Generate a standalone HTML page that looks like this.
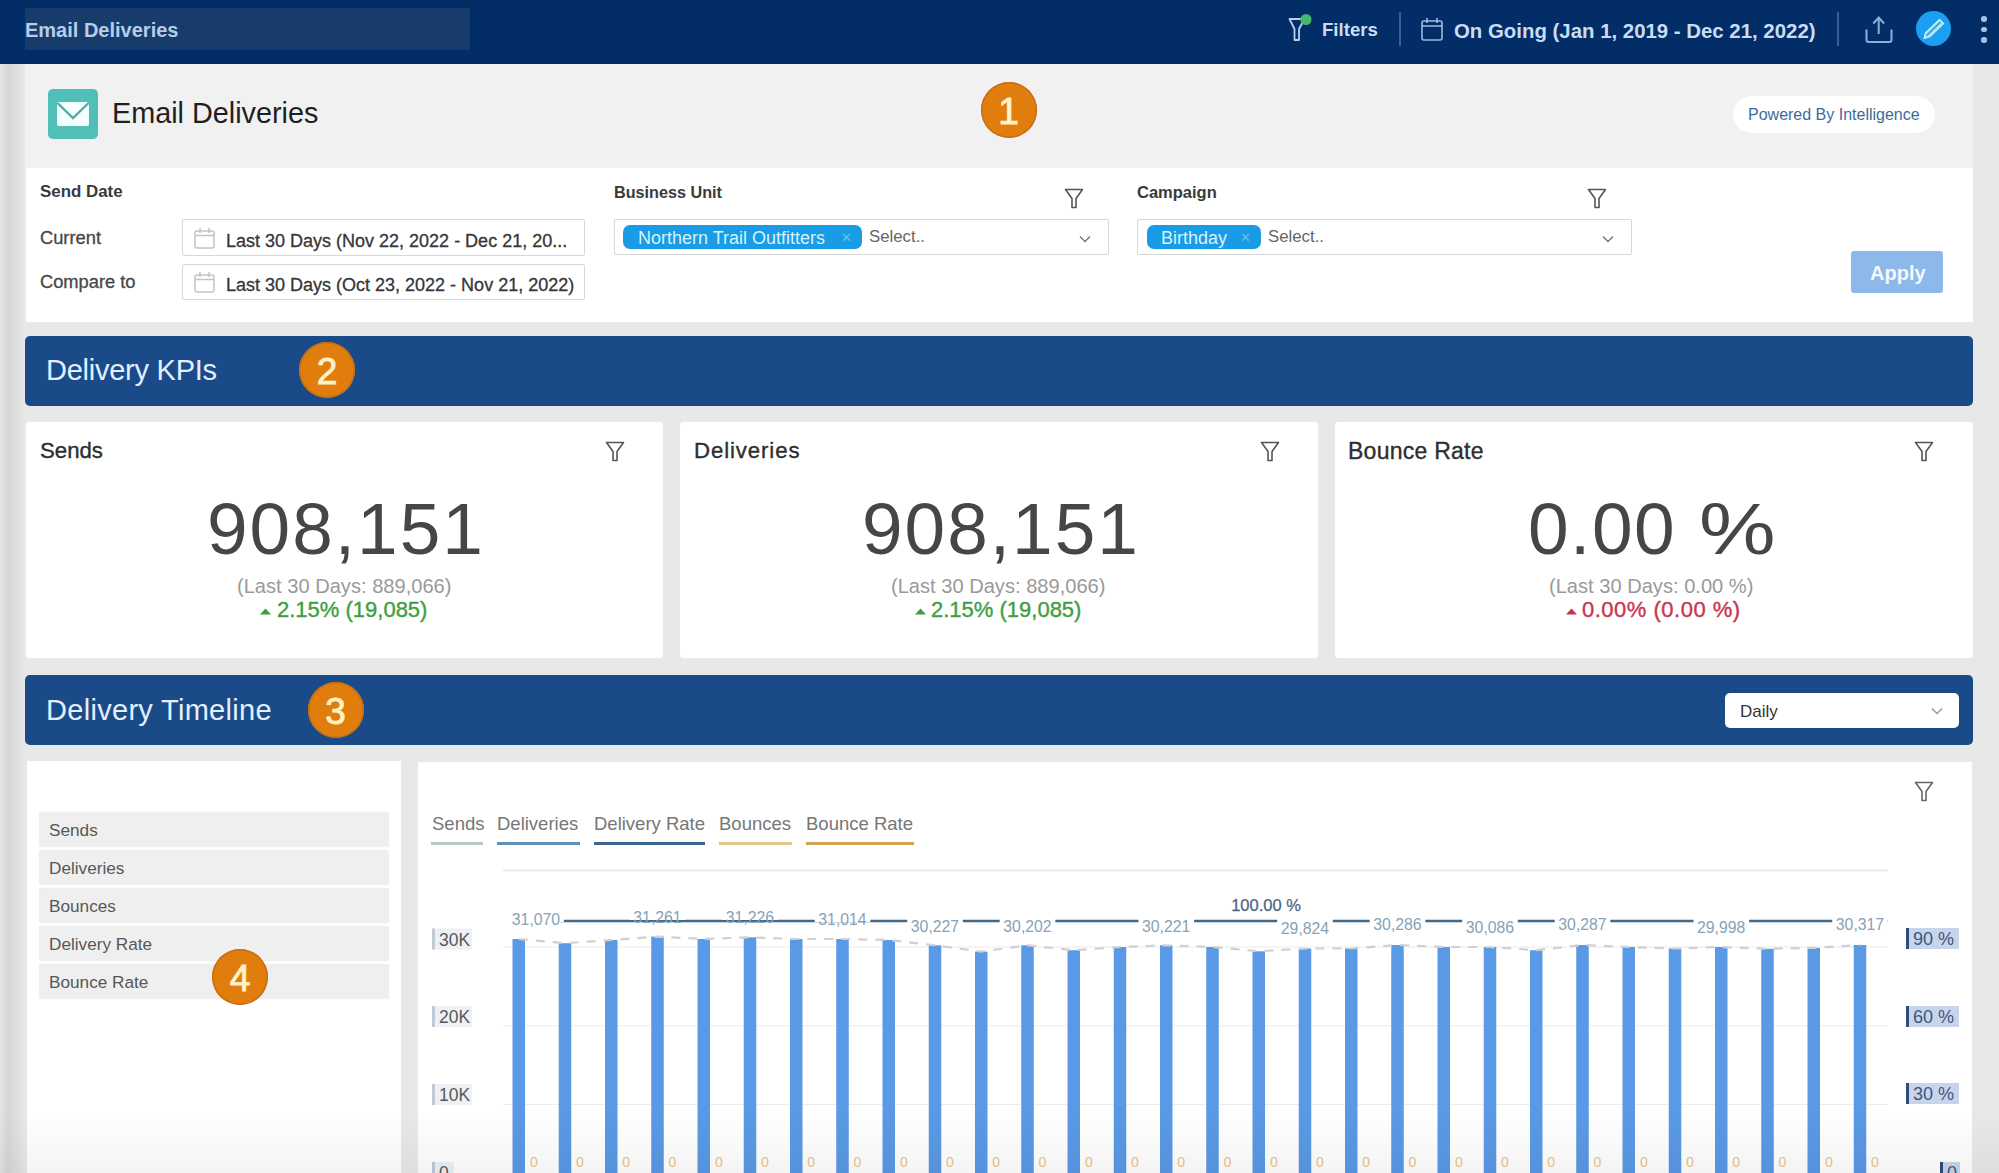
<!DOCTYPE html>
<html><head><meta charset="utf-8">
<style>
*{box-sizing:border-box;margin:0;padding:0}
html,body{width:1999px;height:1173px;overflow:hidden}
body{background:#e8e8e8;font-family:"Liberation Sans",sans-serif;position:relative;color:#2b2b2b}
.abs{position:absolute}
.nw{white-space:nowrap}
.t{position:absolute;white-space:nowrap;line-height:1}
#topbar{left:0;top:0;width:1999px;height:64px;background:#032d66}
.tb{position:absolute;font-size:20px;font-weight:bold;color:#c9dcf3;white-space:nowrap;line-height:1}
.inp{position:absolute;border:1.5px solid #d8d8d8;border-radius:2px;background:#fff}
.pill{position:absolute;background:#1a9be6;border-radius:7px;color:#e6f7ff;white-space:nowrap}
.secbar{background:#1a4b88;border-radius:5px;left:25px;width:1948px;height:70px}
.badge{position:absolute;border-radius:50%;background:#e17d0c;color:#fff2c6;font-size:37px;-webkit-text-stroke:0.9px #fff2c6;text-align:center;padding-top:2px;box-shadow:inset 0 0 0 1.5px #c46f18}
.card{background:#fff;top:422px;height:236px;border-radius:3px}
</style></head><body>
<div class="abs" style="left:0;top:64px;width:25px;height:1109px;background:linear-gradient(90deg,#e4e4e4 0px,#d7d7d7 8px,#e2e2e2 20px,#e8e8e8 25px)"></div>
<div id="topbar" class="abs"></div>
<div class="abs" style="left:25px;top:8px;width:445px;height:42px;background:#173b6a"></div>
<div class="tb" style="left:25px;top:20px;color:#b6cde9">Email Deliveries</div>
<svg class="abs" style="left:1286px;top:12px" width="28" height="32" viewBox="0 0 28 32">
  <path d="M3.5 7 H18.5 L13 17 V28 H8.5 V17 Z" fill="none" stroke="#b9d0ee" stroke-width="1.8" stroke-linejoin="round"/>
  <circle cx="20" cy="7.5" r="5.5" fill="#45b86a"/>
</svg>
<div class="tb" style="left:1322px;top:21px;font-size:18.6px">Filters</div>
<div class="abs" style="left:1399px;top:12px;width:2px;height:34px;background:#3a5e90"></div>
<svg class="abs" style="left:1420px;top:16px" width="26" height="26" viewBox="0 0 26 26">
  <rect x="2" y="5" width="20" height="19" rx="2" fill="none" stroke="#9db8de" stroke-width="1.6"/>
  <path d="M2 10 H22 M7 2 V7 M17 2 V7" stroke="#9db8de" stroke-width="1.6"/>
</svg>
<div class="tb" style="left:1454px;top:21px;font-size:20.4px">On Going (Jan 1, 2019 - Dec 21, 2022)</div>
<div class="abs" style="left:1837px;top:12px;width:2px;height:34px;background:#3a5e90"></div>
<svg class="abs" style="left:1862px;top:14px" width="34" height="32" viewBox="0 0 34 32">
  <path d="M4.5 15.5 V26 Q4.5 28 6.5 28 H27.5 Q29.5 28 29.5 26 V15.5" fill="none" stroke="#8eaedb" stroke-width="2"/>
  <path d="M16.7 20 V4 M11.3 9.5 L16.7 3.6 L22.1 9.5" fill="none" stroke="#8eaedb" stroke-width="2"/>
</svg>
<div class="abs" style="left:1915.5px;top:10.5px;width:35.5px;height:35.5px;border-radius:50%;background:#1b9ff0"></div>
<svg class="abs" style="left:1915px;top:10px" width="36" height="36" viewBox="0 0 36 36">
  <path d="M9 28.5 L10.5 23 L24.5 9.5 L28.5 13.5 L14.5 27 Z" fill="#8fe0ff" stroke="#c9f1ff" stroke-width="1.2" stroke-linejoin="round"/>
  <path d="M11.5 25.5 L25.5 12" stroke="#3b8fc0" stroke-width="1.3"/>
</svg>
<div class="abs" style="left:1981.3px;top:16.3px;width:5.4px;height:5.4px;border-radius:50%;background:#a9c0e6"></div>
<div class="abs" style="left:1981.3px;top:26.8px;width:5.4px;height:5.4px;border-radius:50%;background:#a9c0e6"></div>
<div class="abs" style="left:1981.3px;top:37.3px;width:5.4px;height:5.4px;border-radius:50%;background:#a9c0e6"></div>

<div class="abs" style="left:25px;top:64px;width:1948px;height:104px;background:#f1f1f1"></div>
<div class="abs" style="left:48px;top:89px;width:50px;height:50px;border-radius:5px;background:#50bfb8"></div>
<svg class="abs" style="left:48px;top:89px" width="50" height="50" viewBox="0 0 50 50">
  <rect x="9" y="13" width="32" height="24" rx="2" fill="#f4ffff"/>
  <path d="M9.5 14 L25 29 L40.5 14" fill="none" stroke="#58aaa3" stroke-width="2.4"/>
</svg>
<div class="t" style="left:112px;top:99px;font-size:28.8px;color:#1f1f1f">Email Deliveries</div>
<div class="badge" style="left:980.5px;top:82.0px;width:56px;height:56px;line-height:56px">1</div>
<div class="abs" style="left:1733px;top:96px;width:202px;height:37px;border-radius:19px;background:#fff"></div>
<div class="t" style="left:1748px;top:107px;font-size:16px;color:#3d6a98">Powered By Intelligence</div>

<div class="abs" style="left:26px;top:168px;width:1947px;height:154px;background:#fff"></div>
<div class="t" style="left:40px;top:184px;font-size:16.9px;font-weight:bold;color:#3a3a3a">Send Date</div>
<div class="t" style="left:40px;top:229px;font-size:18.3px;color:#474747;-webkit-text-stroke:0.3px #474747">Current</div>
<div class="t" style="left:40px;top:273px;font-size:18.3px;color:#474747;-webkit-text-stroke:0.3px #474747">Compare to</div>
<div class="inp" style="left:182px;top:219px;width:403px;height:37px"></div>
<div class="inp" style="left:182px;top:264px;width:403px;height:36px"></div>
<svg class="abs" style="left:193px;top:226px" width="24" height="24" viewBox="0 0 24 24"><rect x="2" y="5" width="19" height="17" rx="2" fill="none" stroke="#c4c4c4" stroke-width="1.5"/><path d="M2 9.5 H21 M7 2 V7 M16 2 V7" stroke="#c4c4c4" stroke-width="1.5"/></svg><svg class="abs" style="left:193px;top:270px" width="24" height="24" viewBox="0 0 24 24"><rect x="2" y="5" width="19" height="17" rx="2" fill="none" stroke="#c4c4c4" stroke-width="1.5"/><path d="M2 9.5 H21 M7 2 V7 M16 2 V7" stroke="#c4c4c4" stroke-width="1.5"/></svg>
<div class="t" style="left:226px;top:232px;font-size:18px;color:#363636;-webkit-text-stroke:0.3px #363636">Last 30 Days (Nov 22, 2022 - Dec 21, 20...</div>
<div class="t" style="left:226px;top:276px;font-size:18px;color:#363636;-webkit-text-stroke:0.3px #363636">Last 30 Days (Oct 23, 2022 - Nov 21, 2022)</div>

<div class="t" style="left:614px;top:184px;font-size:16.2px;font-weight:bold;color:#3a3a3a">Business Unit</div>
<svg class="abs" style="left:1064px;top:188px" width="20" height="21" viewBox="0 0 20 21"><path d="M1.5 1.5 H18.5 L12 10.5 V19.5 H8 V10.5 Z" fill="none" stroke="#555" stroke-width="1.6" stroke-linejoin="round"/></svg>
<div class="inp" style="left:614px;top:219px;width:495px;height:36px"></div>
<div class="pill" style="left:623px;top:225px;width:239px;height:24px"></div>
<div class="t" style="left:638px;top:229px;font-size:18px;color:#d2f4ff">Northern Trail Outfitters</div>
<div class="t" style="left:841px;top:231px;font-size:13px;color:#62c2f2">&#x2715;</div>
<div class="t" style="left:869px;top:229px;font-size:16.8px;color:#666">Select..</div>
<svg class="abs" style="left:1079px;top:235px" width="12" height="8" viewBox="0 0 12 8"><path d="M1 1.5 L6 6.5 L11 1.5" fill="none" stroke="#777" stroke-width="1.4"/></svg>

<div class="t" style="left:1137px;top:184px;font-size:16.5px;font-weight:bold;color:#3a3a3a">Campaign</div>
<svg class="abs" style="left:1587px;top:188px" width="20" height="21" viewBox="0 0 20 21"><path d="M1.5 1.5 H18.5 L12 10.5 V19.5 H8 V10.5 Z" fill="none" stroke="#555" stroke-width="1.6" stroke-linejoin="round"/></svg>
<div class="inp" style="left:1137px;top:219px;width:495px;height:36px"></div>
<div class="pill" style="left:1147px;top:225px;width:114px;height:24px"></div>
<div class="t" style="left:1161px;top:229px;font-size:18px;color:#d2f4ff">Birthday</div>
<div class="t" style="left:1240px;top:231px;font-size:13px;color:#62c2f2">&#x2715;</div>
<div class="t" style="left:1268px;top:229px;font-size:16.8px;color:#666">Select..</div>
<svg class="abs" style="left:1602px;top:235px" width="12" height="8" viewBox="0 0 12 8"><path d="M1 1.5 L6 6.5 L11 1.5" fill="none" stroke="#777" stroke-width="1.4"/></svg>
<div class="abs" style="left:1851px;top:251px;width:92px;height:42px;border-radius:3px;background:#8db9ea"></div>
<div class="t" style="left:1870px;top:263px;font-size:20px;font-weight:bold;color:#f3f8ff">Apply</div>

<div class="abs secbar" style="top:336px"></div>
<div class="t" style="left:46px;top:356px;font-size:29px;letter-spacing:-0.25px;color:#e2efff">Delivery KPIs</div>
<div class="badge" style="left:299.0px;top:342.0px;width:56px;height:56px;line-height:56px">2</div>

<div class="abs card" style="left:26px;width:637px"></div>
<div class="t" style="left:40px;top:440px;font-size:22.2px;color:#2e2e2e;-webkit-text-stroke:0.35px #2e2e2e">Sends</div>
<svg class="abs" style="left:605px;top:441px" width="20" height="21" viewBox="0 0 20 21"><path d="M1.5 1.5 H18.5 L12 10.5 V19.5 H8 V10.5 Z" fill="none" stroke="#555" stroke-width="1.6" stroke-linejoin="round"/></svg>
<div class="t" style="left:207px;top:492px;font-size:73px;letter-spacing:2px;color:#464646">908,151</div>
<div class="t" style="left:237px;top:576px;font-size:20.1px;color:#9a9a9a">(Last 30 Days: 889,066)</div>
<svg class="abs" style="left:260px;top:608px" width="11" height="7"><path d="M0 6.5 L5.5 0.5 L11 6.5 Z" fill="#3f9b46"/></svg>
<div class="t" style="left:277px;top:599px;font-size:22px;color:#3f9f44;-webkit-text-stroke:0.4px #3f9f44">2.15% (19,085)</div>

<div class="abs card" style="left:680px;width:638px"></div>
<div class="t" style="left:694px;top:440px;font-size:22.2px;letter-spacing:0.9px;color:#2e2e2e;-webkit-text-stroke:0.35px #2e2e2e">Deliveries</div>
<svg class="abs" style="left:1260px;top:441px" width="20" height="21" viewBox="0 0 20 21"><path d="M1.5 1.5 H18.5 L12 10.5 V19.5 H8 V10.5 Z" fill="none" stroke="#555" stroke-width="1.6" stroke-linejoin="round"/></svg>
<div class="t" style="left:862px;top:492px;font-size:73px;letter-spacing:2px;color:#464646">908,151</div>
<div class="t" style="left:891px;top:576px;font-size:20.1px;color:#9a9a9a">(Last 30 Days: 889,066)</div>
<svg class="abs" style="left:915px;top:608px" width="11" height="7"><path d="M0 6.5 L5.5 0.5 L11 6.5 Z" fill="#3f9b46"/></svg>
<div class="t" style="left:931px;top:599px;font-size:22px;color:#3f9f44;-webkit-text-stroke:0.4px #3f9f44">2.15% (19,085)</div>

<div class="abs card" style="left:1335px;width:638px"></div>
<div class="t" style="left:1348px;top:440px;font-size:23px;letter-spacing:0.25px;color:#2e2e2e;-webkit-text-stroke:0.35px #2e2e2e">Bounce Rate</div>
<svg class="abs" style="left:1914px;top:441px" width="20" height="21" viewBox="0 0 20 21"><path d="M1.5 1.5 H18.5 L12 10.5 V19.5 H8 V10.5 Z" fill="none" stroke="#555" stroke-width="1.6" stroke-linejoin="round"/></svg>
<div class="t" style="left:1528px;top:492px;font-size:73px;letter-spacing:1.5px;color:#464646">0.00<span style="display:inline-block;width:23px"></span><span style="display:inline-block;transform:scaleX(1.18);transform-origin:0 0">%</span></div>
<div class="t" style="left:1549px;top:576px;font-size:20.1px;color:#9a9a9a">(Last 30 Days: 0.00 %)</div>
<svg class="abs" style="left:1566px;top:608px" width="11" height="7"><path d="M0 6.5 L5.5 0.5 L11 6.5 Z" fill="#c2354f"/></svg>
<div class="t" style="left:1582px;top:599px;font-size:22px;letter-spacing:0.5px;color:#c8374f;-webkit-text-stroke:0.4px #c8374f">0.00% (0.00 %)</div>

<div class="abs secbar" style="top:675px"></div>
<div class="t" style="left:46px;top:696px;font-size:29px;letter-spacing:0.3px;color:#e2efff">Delivery Timeline</div>
<div class="badge" style="left:307.5px;top:681.5px;width:56px;height:56px;line-height:56px">3</div>
<div class="abs" style="left:1725px;top:693px;width:234px;height:35px;border-radius:5px;background:#fff"></div>
<div class="t" style="left:1740px;top:703px;font-size:17px;color:#333">Daily</div>
<svg class="abs" style="left:1931px;top:707px" width="12" height="8" viewBox="0 0 12 8"><path d="M1 1.5 L6 6.5 L11 1.5" fill="none" stroke="#999" stroke-width="1.4"/></svg>

<div class="abs" style="left:27px;top:761px;width:374px;height:420px;background:#fff"></div>
<div class="abs" style="left:39px;top:812px;width:350px;height:35px;background:#efefef;border-radius:3px;box-shadow:0 0 1px rgba(0,0,0,.12)"></div>
<div class="abs" style="left:39px;top:850px;width:350px;height:35px;background:#efefef;border-radius:3px;box-shadow:0 0 1px rgba(0,0,0,.12)"></div>
<div class="abs" style="left:39px;top:888px;width:350px;height:35px;background:#efefef;border-radius:3px;box-shadow:0 0 1px rgba(0,0,0,.12)"></div>
<div class="abs" style="left:39px;top:926px;width:350px;height:35px;background:#efefef;border-radius:3px;box-shadow:0 0 1px rgba(0,0,0,.12)"></div>
<div class="abs" style="left:39px;top:964px;width:350px;height:35px;background:#efefef;border-radius:3px;box-shadow:0 0 1px rgba(0,0,0,.12)"></div>
<div class="t" style="left:49px;top:822px;font-size:17.2px;color:#575757">Sends</div>
<div class="t" style="left:49px;top:860px;font-size:17.2px;color:#575757">Deliveries</div>
<div class="t" style="left:49px;top:898px;font-size:17.2px;color:#575757">Bounces</div>
<div class="t" style="left:49px;top:936px;font-size:17.2px;color:#575757">Delivery Rate</div>
<div class="t" style="left:49px;top:974px;font-size:17.2px;color:#575757">Bounce Rate</div>
<div class="badge" style="left:212.0px;top:949.0px;width:56px;height:56px;line-height:56px">4</div>

<div class="abs" style="left:418px;top:762px;width:1554px;height:420px;background:#fff"></div>
<svg class="abs" style="left:1914px;top:781px" width="20" height="21" viewBox="0 0 20 21"><path d="M1.5 1.5 H18.5 L12 10.5 V19.5 H8 V10.5 Z" fill="none" stroke="#666" stroke-width="1.6" stroke-linejoin="round"/></svg>
<div class="t" style="left:432px;top:815px;font-size:18.5px;color:#777">Sends</div>
<div class="t" style="left:497px;top:815px;font-size:18.5px;color:#777">Deliveries</div>
<div class="t" style="left:594px;top:815px;font-size:18.5px;color:#777">Delivery Rate</div>
<div class="t" style="left:719px;top:815px;font-size:18.5px;color:#777">Bounces</div>
<div class="t" style="left:806px;top:815px;font-size:18.5px;color:#777">Bounce Rate</div>
<div class="abs" style="left:431px;top:842px;width:52px;height:3px;background:#bcc6cb"></div>
<div class="abs" style="left:497px;top:842px;width:83px;height:3px;background:#5f90b8"></div>
<div class="abs" style="left:594px;top:842px;width:111px;height:3px;background:#3c6690"></div>
<div class="abs" style="left:719px;top:842px;width:73px;height:3px;background:#e6c48e"></div>
<div class="abs" style="left:806px;top:842px;width:108px;height:3px;background:#d6a356"></div>
<svg class="abs" style="left:0;top:0" width="1999" height="1173" viewBox="0 0 1999 1173" font-family="Liberation Sans, sans-serif">
<line x1="503" y1="870.5" x2="1888" y2="870.5" stroke="#e6e6e6" stroke-width="1.5"/>
<line x1="503" y1="947" x2="1888" y2="947" stroke="#ececec" stroke-width="1.2"/>
<line x1="503" y1="1025.75" x2="1888" y2="1025.75" stroke="#ececec" stroke-width="1.2"/>
<line x1="503" y1="1104.5" x2="1888" y2="1104.5" stroke="#ececec" stroke-width="1.2"/>
<rect x="512.50" y="939" width="12.5" height="244" fill="#5a99e5"/>
<rect x="558.75" y="943.2" width="12.5" height="239.79999999999995" fill="#5a99e5"/>
<rect x="605.00" y="940" width="12.5" height="243" fill="#5a99e5"/>
<rect x="651.25" y="936.6" width="12.5" height="246.39999999999998" fill="#5a99e5"/>
<rect x="697.50" y="939" width="12.5" height="244" fill="#5a99e5"/>
<rect x="743.75" y="937.3" width="12.5" height="245.70000000000005" fill="#5a99e5"/>
<rect x="790.00" y="939" width="12.5" height="244" fill="#5a99e5"/>
<rect x="836.25" y="939" width="12.5" height="244" fill="#5a99e5"/>
<rect x="882.50" y="940" width="12.5" height="243" fill="#5a99e5"/>
<rect x="928.75" y="945.3" width="12.5" height="237.70000000000005" fill="#5a99e5"/>
<rect x="975.00" y="951.6" width="12.5" height="231.39999999999998" fill="#5a99e5"/>
<rect x="1021.25" y="945.3" width="12.5" height="237.70000000000005" fill="#5a99e5"/>
<rect x="1067.50" y="950.2" width="12.5" height="232.79999999999995" fill="#5a99e5"/>
<rect x="1113.75" y="947" width="12.5" height="236" fill="#5a99e5"/>
<rect x="1160.00" y="945.3" width="12.5" height="237.70000000000005" fill="#5a99e5"/>
<rect x="1206.25" y="947" width="12.5" height="236" fill="#5a99e5"/>
<rect x="1252.50" y="951.3" width="12.5" height="231.70000000000005" fill="#5a99e5"/>
<rect x="1298.75" y="948.5" width="12.5" height="234.5" fill="#5a99e5"/>
<rect x="1345.00" y="948.5" width="12.5" height="234.5" fill="#5a99e5"/>
<rect x="1391.25" y="945" width="12.5" height="238" fill="#5a99e5"/>
<rect x="1437.50" y="947" width="12.5" height="236" fill="#5a99e5"/>
<rect x="1483.75" y="947" width="12.5" height="236" fill="#5a99e5"/>
<rect x="1530.00" y="950.2" width="12.5" height="232.79999999999995" fill="#5a99e5"/>
<rect x="1576.25" y="945" width="12.5" height="238" fill="#5a99e5"/>
<rect x="1622.50" y="947" width="12.5" height="236" fill="#5a99e5"/>
<rect x="1668.75" y="948.5" width="12.5" height="234.5" fill="#5a99e5"/>
<rect x="1715.00" y="947" width="12.5" height="236" fill="#5a99e5"/>
<rect x="1761.25" y="948.8" width="12.5" height="234.20000000000005" fill="#5a99e5"/>
<rect x="1807.50" y="947.8" width="12.5" height="235.20000000000005" fill="#5a99e5"/>
<rect x="1853.75" y="945" width="12.5" height="238" fill="#5a99e5"/>
<polyline points="518.8,939.0 565.0,943.2 611.2,940.0 657.5,936.6 703.8,939.0 750.0,937.3 796.2,939.0 842.5,939.0 888.8,940.0 935.0,945.3 981.2,951.6 1027.5,945.3 1073.8,950.2 1120.0,947.0 1166.2,945.3 1212.5,947.0 1258.8,951.3 1305.0,948.5 1351.2,948.5 1397.5,945.0 1443.8,947.0 1490.0,947.0 1536.2,950.2 1582.5,945.0 1628.8,947.0 1675.0,948.5 1721.2,947.0 1767.5,948.8 1813.8,947.8 1860.0,945.0" fill="none" stroke="#d0d0d0" stroke-width="2.2" stroke-dasharray="9,8"/>
<line x1="560" y1="921" x2="1888" y2="921" stroke="#41698a" stroke-width="2.5"/>
<rect x="508.2" y="906" width="55.6" height="16" fill="#fff"/>
<text x="536.0" y="925" text-anchor="middle" font-size="15.8" fill="#87a2b8">31,070</text>
<rect x="629.7" y="904" width="55.6" height="16" fill="#fff"/>
<text x="657.5" y="923" text-anchor="middle" font-size="15.8" fill="#87a2b8">31,261</text>
<rect x="722.2" y="904" width="55.6" height="16" fill="#fff"/>
<text x="750.0" y="923" text-anchor="middle" font-size="15.8" fill="#87a2b8">31,226</text>
<rect x="814.7" y="906" width="55.6" height="16" fill="#fff"/>
<text x="842.5" y="925" text-anchor="middle" font-size="15.8" fill="#87a2b8">31,014</text>
<rect x="907.2" y="913" width="55.6" height="16" fill="#fff"/>
<text x="935.0" y="932" text-anchor="middle" font-size="15.8" fill="#87a2b8">30,227</text>
<rect x="999.7" y="913" width="55.6" height="16" fill="#fff"/>
<text x="1027.5" y="932" text-anchor="middle" font-size="15.8" fill="#87a2b8">30,202</text>
<rect x="1138.5" y="913" width="55.6" height="16" fill="#fff"/>
<text x="1166.2" y="932" text-anchor="middle" font-size="15.8" fill="#87a2b8">30,221</text>
<rect x="1277.2" y="915" width="55.6" height="16" fill="#fff"/>
<text x="1305.0" y="934" text-anchor="middle" font-size="15.8" fill="#87a2b8">29,824</text>
<rect x="1369.7" y="911" width="55.6" height="16" fill="#fff"/>
<text x="1397.5" y="930" text-anchor="middle" font-size="15.8" fill="#87a2b8">30,286</text>
<rect x="1462.2" y="914" width="55.6" height="16" fill="#fff"/>
<text x="1490.0" y="933" text-anchor="middle" font-size="15.8" fill="#87a2b8">30,086</text>
<rect x="1554.7" y="911" width="55.6" height="16" fill="#fff"/>
<text x="1582.5" y="930" text-anchor="middle" font-size="15.8" fill="#87a2b8">30,287</text>
<rect x="1693.5" y="914" width="55.6" height="16" fill="#fff"/>
<text x="1721.2" y="933" text-anchor="middle" font-size="15.8" fill="#87a2b8">29,998</text>
<rect x="1832.2" y="911" width="55.6" height="16" fill="#fff"/>
<text x="1860.0" y="930" text-anchor="middle" font-size="15.8" fill="#87a2b8">30,317</text>
<rect x="1222" y="893" width="90" height="22" fill="#fff"/>
<text x="1266" y="911" text-anchor="middle" font-size="16.5" fill="#4a6680" stroke="#4a6680" stroke-width="0.25">100.00 %</text>
<text x="533.8" y="1167" text-anchor="middle" font-size="14" fill="#ebc486">0</text>
<text x="580.0" y="1167" text-anchor="middle" font-size="14" fill="#ebc486">0</text>
<text x="626.2" y="1167" text-anchor="middle" font-size="14" fill="#ebc486">0</text>
<text x="672.5" y="1167" text-anchor="middle" font-size="14" fill="#ebc486">0</text>
<text x="718.8" y="1167" text-anchor="middle" font-size="14" fill="#ebc486">0</text>
<text x="765.0" y="1167" text-anchor="middle" font-size="14" fill="#ebc486">0</text>
<text x="811.2" y="1167" text-anchor="middle" font-size="14" fill="#ebc486">0</text>
<text x="857.5" y="1167" text-anchor="middle" font-size="14" fill="#ebc486">0</text>
<text x="903.8" y="1167" text-anchor="middle" font-size="14" fill="#ebc486">0</text>
<text x="950.0" y="1167" text-anchor="middle" font-size="14" fill="#ebc486">0</text>
<text x="996.2" y="1167" text-anchor="middle" font-size="14" fill="#ebc486">0</text>
<text x="1042.5" y="1167" text-anchor="middle" font-size="14" fill="#ebc486">0</text>
<text x="1088.8" y="1167" text-anchor="middle" font-size="14" fill="#ebc486">0</text>
<text x="1135.0" y="1167" text-anchor="middle" font-size="14" fill="#ebc486">0</text>
<text x="1181.2" y="1167" text-anchor="middle" font-size="14" fill="#ebc486">0</text>
<text x="1227.5" y="1167" text-anchor="middle" font-size="14" fill="#ebc486">0</text>
<text x="1273.8" y="1167" text-anchor="middle" font-size="14" fill="#ebc486">0</text>
<text x="1320.0" y="1167" text-anchor="middle" font-size="14" fill="#ebc486">0</text>
<text x="1366.2" y="1167" text-anchor="middle" font-size="14" fill="#ebc486">0</text>
<text x="1412.5" y="1167" text-anchor="middle" font-size="14" fill="#ebc486">0</text>
<text x="1458.8" y="1167" text-anchor="middle" font-size="14" fill="#ebc486">0</text>
<text x="1505.0" y="1167" text-anchor="middle" font-size="14" fill="#ebc486">0</text>
<text x="1551.2" y="1167" text-anchor="middle" font-size="14" fill="#ebc486">0</text>
<text x="1597.5" y="1167" text-anchor="middle" font-size="14" fill="#ebc486">0</text>
<text x="1643.8" y="1167" text-anchor="middle" font-size="14" fill="#ebc486">0</text>
<text x="1690.0" y="1167" text-anchor="middle" font-size="14" fill="#ebc486">0</text>
<text x="1736.2" y="1167" text-anchor="middle" font-size="14" fill="#ebc486">0</text>
<text x="1782.5" y="1167" text-anchor="middle" font-size="14" fill="#ebc486">0</text>
<text x="1828.8" y="1167" text-anchor="middle" font-size="14" fill="#ebc486">0</text>
<text x="1875.0" y="1167" text-anchor="middle" font-size="14" fill="#ebc486">0</text>
<rect x="432" y="928.5" width="40" height="21" fill="#edf0f4"/>
<rect x="432" y="928.5" width="3" height="21" fill="#bfcad4"/>
<text x="439" y="945.5" font-size="17.5" fill="#585858">30K</text>
<rect x="432" y="1006" width="40" height="21" fill="#edf0f4"/>
<rect x="432" y="1006" width="3" height="21" fill="#bfcad4"/>
<text x="439" y="1023" font-size="17.5" fill="#585858">20K</text>
<rect x="432" y="1084" width="40" height="21" fill="#edf0f4"/>
<rect x="432" y="1084" width="3" height="21" fill="#bfcad4"/>
<text x="439" y="1101" font-size="17.5" fill="#585858">10K</text>
<rect x="432" y="1162" width="22" height="21" fill="#edf0f4"/>
<rect x="432" y="1162" width="3" height="21" fill="#bfcad4"/>
<text x="439" y="1179" font-size="17.5" fill="#585858">0</text>
<rect x="1906" y="928" width="53" height="21" fill="#c8d4ea"/>
<rect x="1906" y="928" width="3" height="21" fill="#2f4d7c"/>
<text x="1913" y="945" font-size="18" fill="#3b5682">90 %</text>
<rect x="1906" y="1006" width="53" height="21" fill="#c8d4ea"/>
<rect x="1906" y="1006" width="3" height="21" fill="#2f4d7c"/>
<text x="1913" y="1023" font-size="18" fill="#3b5682">60 %</text>
<rect x="1906" y="1083" width="53" height="21" fill="#c8d4ea"/>
<rect x="1906" y="1083" width="3" height="21" fill="#2f4d7c"/>
<text x="1913" y="1100" font-size="18" fill="#3b5682">30 %</text>
<rect x="1940" y="1162" width="20" height="21" fill="#c8d4ea"/>
<rect x="1940" y="1162" width="3" height="21" fill="#2f4d7c"/>
<text x="1947" y="1179" font-size="18" fill="#3b5682">0</text>
</svg>
<div class="abs" style="left:0;top:1110px;width:1999px;height:63px;background:linear-gradient(180deg,rgba(0,0,0,0),rgba(0,0,0,0.045))"></div>
</body></html>
